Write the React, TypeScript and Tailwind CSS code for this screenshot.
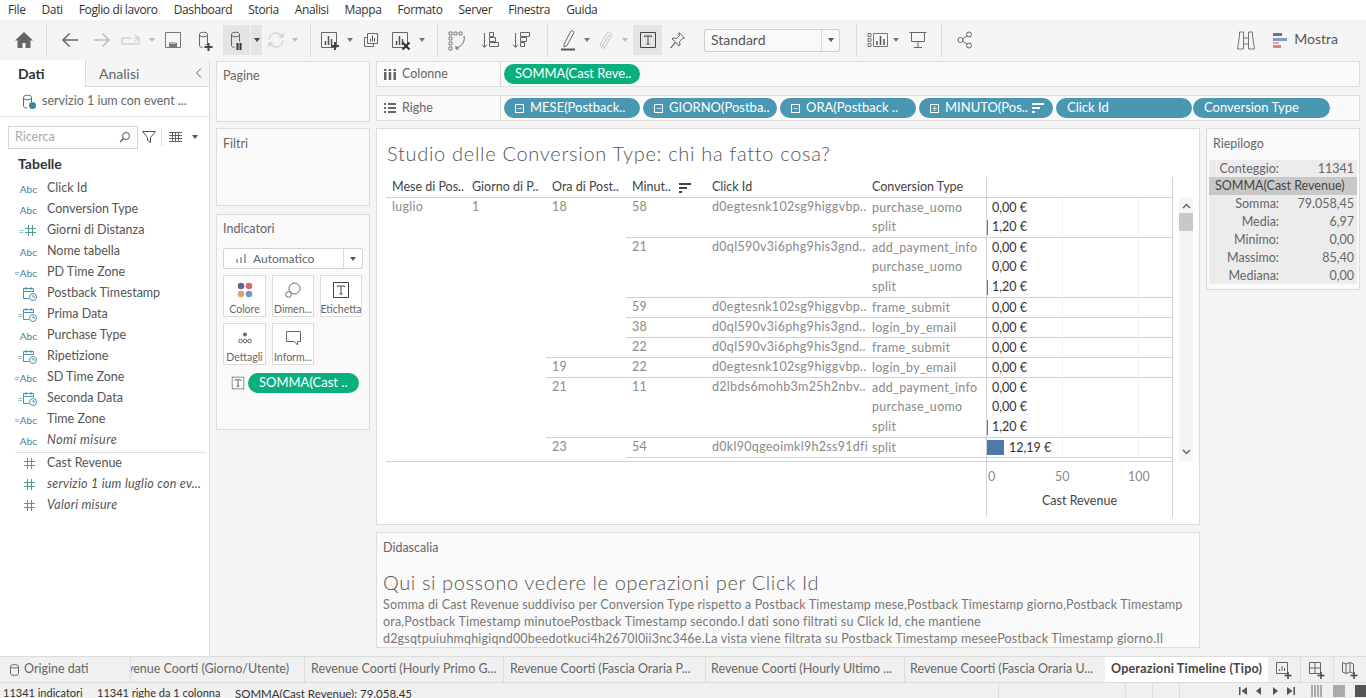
import type { ReactNode } from "react";

/* ── Toolbar icons ─────────────────────────────────────────── */

const Ico = ({ children, w = 24, h = 24 }: { children: ReactNode; w?: number; h?: number }) => (
  <svg width={w} height={h} viewBox={`0 0 ${w} ${h}`} fill="none" stroke="#666" strokeWidth="1" className="block shrink-0">
    {children}
  </svg>
);

const Caret = ({ color = "#777" }: { color?: string }) => (
  <svg width="6" height="4" viewBox="0 0 6 4" className="block shrink-0">
    <path d="M0 0h6L3 4z" fill={color} />
  </svg>
);

const DbPlus = () => (
  <Ico>
    <path d="M6.5 6.5c0-3 8-3 8 0v10h-2M6.5 6.5v11c0 1.500 2 2 3 2M6.5 6.500c0 3 8 3 8 0" />
    <path d="M15.500 15v8M11.500 19h8" stroke="#444" strokeWidth="2" />
  </Ico>
);

const SheetBars = ({ x = 5, y = 5 }: { x?: number; y?: number }) => (
  <g transform={`translate(${x} ${y})`}>
    <path d="M.5.500h15v15H.5z" />
    <path d="M4.500 13V9M7.500 13V4M10.500 13V7" stroke="#555" strokeWidth="1.500" />
  </g>
);

const TBox = () => (
  <Ico w={16} h={16}>
    <path d="M.5.500h15v15H.5z" stroke="#444" />
    <path d="M4.500 5V4h7v1M8 4v8M6.500 12h3" stroke="#444" />
  </Ico>
);

const Sep = () => <div className="w-px h-[34px] bg-[#dcdcdc] shrink-0" />;

const SortBars = () => (
  <svg width="14" height="10" viewBox="0 0 14 10" className="block shrink-0">
    <path d="M1 0h12v2H1zM1 4h8v2H1zM1 8h3v2H1z" fill="currentColor" />
  </svg>
);

const HashMark = () => (
  <svg width="13" height="13" viewBox="0 0 13 13" stroke="#4aa08b" strokeWidth="1" className="block">
    <path d="M4.500 1v11M8.500 1v11M1 4.500h11M1 8.500h11" />
  </svg>
);

const CalClock = () => (
  <svg width="14" height="15" viewBox="0 0 14 15" fill="none" stroke="#4d93ad" strokeWidth="1" className="block">
    <path d="M6 12.500H.5v-10h10V6M.5 5.500h10M3 1v3M8 1v3" />
    <circle cx="10" cy="11" r="3.500" />
    <path d="M10 9v2h2" />
  </svg>
);

/* ── Data ──────────────────────────────────────────────────── */

const MENU = ["File", "Dati", "Foglio di lavoro", "Dashboard", "Storia", "Analisi", "Mappa", "Formato", "Server", "Finestra", "Guida"];

const FIELDS: { kind: string; name: string; italic?: boolean }[] = [
  { kind: "abc", name: "Click Id" },
  { kind: "abc", name: "Conversion Type" },
  { kind: "=#", name: "Giorni di Distanza" },
  { kind: "abc", name: "Nome tabella" },
  { kind: "=abc", name: "PD Time Zone" },
  { kind: "date", name: "Postback Timestamp" },
  { kind: "=date", name: "Prima Data" },
  { kind: "abc", name: "Purchase Type" },
  { kind: "=date", name: "Ripetizione" },
  { kind: "=abc", name: "SD Time Zone" },
  { kind: "=date", name: "Seconda Data" },
  { kind: "=abc", name: "Time Zone" },
  { kind: "abc", name: "Nomi misure", italic: true },
];

const MEASURES = [
  { name: "Cast Revenue", italic: false },
  { name: "servizio 1 ium luglio con ev...", italic: true },
  { name: "Valori misure", italic: true },
];

const A = "d0egtesnk102sg9higgvbp..";
const B = "d0ql590v3i6phg9his3gnd..";

// line = first column that the row's top rule starts from (-1: no rule)
const ROWS = [
  { line: 0, c: ["luglio", "1", "18", "58", A, "purchase_uomo"], val: "0,00 €", bar: 0 },
  { line: -1, c: ["", "", "", "", "", "split"], val: "1,20 €", bar: 2 },
  { line: 3, c: ["", "", "", "21", B, "add_payment_info"], val: "0,00 €", bar: 0 },
  { line: -1, c: ["", "", "", "", "", "purchase_uomo"], val: "0,00 €", bar: 0 },
  { line: -1, c: ["", "", "", "", "", "split"], val: "1,20 €", bar: 2 },
  { line: 3, c: ["", "", "", "59", A, "frame_submit"], val: "0,00 €", bar: 0 },
  { line: 3, c: ["", "", "", "38", B, "login_by_email"], val: "0,00 €", bar: 0 },
  { line: 3, c: ["", "", "", "22", B, "frame_submit"], val: "0,00 €", bar: 0 },
  { line: 2, c: ["", "", "19", "22", A, "login_by_email"], val: "0,00 €", bar: 0 },
  { line: 2, c: ["", "", "21", "11", "d2lbds6mohb3m25h2nbv..", "add_payment_info"], val: "0,00 €", bar: 0 },
  { line: -1, c: ["", "", "", "", "", "purchase_uomo"], val: "0,00 €", bar: 0 },
  { line: -1, c: ["", "", "", "", "", "split"], val: "1,20 €", bar: 2 },
  { line: 2, c: ["", "", "23", "54", "d0kl90qgeoimkl9h2ss91dfi", "split"], val: "12,19 €", bar: 18 },
];

const COL_W = ["w-[80px]", "w-[80px]", "w-[80px]", "w-[80px]", "w-[160px]", "w-[120px]"];

const SUMMARY = [
  ["Somma:", "79.058,45"],
  ["Media:", "6,97"],
  ["Minimo:", "0,00"],
  ["Massimo:", "85,40"],
  ["Mediana:", "0,00"],
];

/* ── Bits ──────────────────────────────────────────────────── */

function FieldIcon({ kind }: { kind: string }) {
  const eq = kind.startsWith("=");
  return (
    <div className="w-[38px] pr-[1px] flex items-center justify-end shrink-0 text-[10px] text-[#3f83a0]">
      {eq && <span className={kind === "=abc" ? "text-[10px] leading-none" : "text-[10px] leading-none text-[#4d93ad]"}>=</span>}
      {kind.includes("abc") && <span className="leading-none">Abc</span>}
      {kind.includes("date") && <CalClock />}
      {kind.includes("#") && <HashMark />}
    </div>
  );
}

function Pill({ children, color, w, sign }: { children: ReactNode; color: string; w: string; sign?: string }) {
  return (
    <div className={`${w} ${color} h-[20px] rounded-[10px] flex items-center pl-[11px] pr-[8px] text-white text-[13px] whitespace-nowrap shrink-0 overflow-hidden`}>
      {sign && (
        <span className="w-[9px] h-[9px] border border-white mr-[6px] flex items-center justify-center text-[9px] leading-none shrink-0">
          {sign}
        </span>
      )}
      {children}
    </div>
  );
}

function MarkBtn({ icon, label }: { icon: ReactNode; label: string }) {
  return (
    <div className="w-[42px] first:w-[43px] h-[42px] border border-[#dcdcdc] bg-white flex flex-col items-center pt-[4px] text-[10.500px] text-[#666] whitespace-nowrap">
      <div className="h-[20px] flex items-center justify-center">{icon}</div>
      <div className="mt-[2px] leading-[14px]">{label}</div>
    </div>
  );
}

/* ── Page ──────────────────────────────────────────────────── */

export default function App() {
  return (
    <div className="w-[1366px] h-[698px] overflow-hidden flex flex-col bg-[#f5f5f5] text-[#666] font-['Lato','Open_Sans',sans-serif] text-[12.500px]">
      {/* ── Menu ───────────────────────────────────────────── */}
      <div className="h-[20px] bg-white flex items-center pl-[8px] gap-[16px] text-[12px] text-[#333] font-['Open_Sans',sans-serif] tracking-[-0.37px] shrink-0">
        {MENU.map((m) => (
          <span key={m}>{m}</span>
        ))}
      </div>

      {/* ── Toolbar ────────────────────────────────────────── */}
      <div className="h-[40px] flex items-center pl-[8px] shrink-0">
        <div className="w-[32px] flex justify-center">
          <svg width="20" height="18" viewBox="0 0 20 18"><path d="M10 1 1 9.500h2.500V17h5v-5h3v5h5V9.500H19z" fill="#666" /></svg>
        </div>
        <div className="ml-[6px]"><Sep /></div>
        <div className="ml-[7px] w-[32px] flex justify-center">
          <Ico w={18} h={16}><path d="M17 8H2M8.500 1.500 2 8l6.500 6.500" strokeWidth="1.500" /></Ico>
        </div>
        <div className="w-[32px] flex justify-center">
          <Ico w={18} h={16}><path d="M1 8h15M9.500 1.500 16 8l-6.500 6.500" stroke="#bbb" strokeWidth="1.500" /></Ico>
        </div>
        <div className="w-[26px] flex justify-center">
          <Ico w={20} h={14}><path d="M1 5v6h17V5h-5M10 5H1M14 2l4 3-4 3" stroke="#c4c4c4" /></Ico>
        </div>
        <div className="w-[16px] flex justify-center"><Caret color="#bbb" /></div>
        <div className="w-[26px] flex justify-center">
          <Ico w={16} h={16}><path d="M.5.500h15v15H.5zM4.500 15v-4h7v4" stroke="#777" /><path d="M5 12h6v3H5z" fill="#777" stroke="none" /></Ico>
        </div>
        <div className="w-[37px] flex justify-center"><DbPlus /></div>
        <div className="w-[27px] h-[30px] bg-[#e4e4e4] flex justify-center items-center">
          <Ico>
            <path d="M6.500 6.500c0-3 8-3 8 0v7M6.500 6.500v11c0 1.500 2 2 3 2M6.500 6.500c0 3 8 3 8 0" />
            <path d="M12.500 15v7M15.500 15v7" stroke="#333" strokeWidth="2" />
          </Ico>
        </div>
        <div className="ml-px w-[11px] h-[30px] bg-[#e4e4e4] flex justify-center items-center"><Caret color="#444" /></div>
        <div className="w-[28px] flex justify-center">
          <Ico w={18} h={18}><path d="M2 9a7 7 0 0 1 12-5l2 2M16 9a7 7 0 0 1-12 5l-2-2M16 2v4h-4M2 16v-4h4" stroke="#c4c4c4" /></Ico>
        </div>
        <div className="w-[10px] flex justify-center"><Caret color="#bbb" /></div>
        <div className="ml-[10px]"><Sep /></div>
        <div className="ml-[7px] w-[26px] flex justify-center">
          <Ico><SheetBars x={2} y={4} /><path d="M16 14v8M12 18h8" stroke="#444" strokeWidth="2" /></Ico>
        </div>
        <div className="w-[12px] flex justify-center"><Caret /></div>
        <div className="w-[30px] flex justify-center">
          <Ico w={20} h={20}>
            <path d="M3.500 7.500h3M3.500 7.500v9h9v-3" />
            <path d="M6.500 3.500h10v10h-10z" />
            <path d="M9.500 11.500V9M11.500 11.500V5.500M13.500 11.500V8" stroke="#555" />
          </Ico>
        </div>
        <div className="w-[32px] flex justify-center">
          <Ico><SheetBars x={2} y={4} /><path d="m12.500 14.500 7 7M19.500 14.500l-7 7" stroke="#333" strokeWidth="2" /></Ico>
        </div>
        <div className="w-[8px] flex justify-center"><Caret /></div>
        <div className="ml-[11px]"><Sep /></div>
        <div className="w-[38px] flex justify-center">
          <Ico>
            <path d="M4 4h3v3H4zM9 4h3v3H9zM14 4h3v3h-3zM4 9h3v3H4zM4 14h3v3H4zM4 19h3v3H4z" strokeWidth=".8" />
            <path d="M19 8c1 5-1 10-8 12M11 18v3h3" />
          </Ico>
        </div>
        <div className="w-[28px] flex justify-center">
          <Ico w={18} h={18}><path d="M3.500 2v14M1 13.500l2.500 3 2.500-3M8.500 1.500h4v4h-4zM8.500 6.500h6v4h-6zM8.500 11.500h9v4h-9z" /></Ico>
        </div>
        <div className="w-[34px] flex justify-center">
          <Ico w={18} h={18}><path d="M3.500 2v14M1 13.500l2.500 3 2.500-3M8.500 1.500h9v4h-9zM8.500 6.500h6v4h-6zM8.500 11.500h4v4h-4z" /></Ico>
        </div>
        <div className="ml-[9px]"><Sep /></div>
        <div className="ml-[8px] w-[24px] flex justify-center">
          <Ico w={18} h={22}>
            <path d="M5 15 12 2c1-1 3 0 3 1.500L8 16.500l-3 1.500z" />
            <path d="M2 20.500h14" stroke="#555" strokeWidth="2" />
          </Ico>
        </div>
        <div className="w-[14px] flex justify-center"><Caret /></div>
        <div className="w-[22px] flex justify-center">
          <Ico w={14} h={20}><path d="M11 5 5 15c-1 2 1 3 2 2l6-11c1-3-2-5-4-3L3 13c-2 3 1 6 3 5" stroke="#c4c4c4" /></Ico>
        </div>
        <div className="w-[17px] flex justify-center"><Caret color="#bbb" /></div>
        <div className="w-[29px] h-[30px] bg-[#e4e4e4] flex items-center justify-center"><TBox /></div>
        <div className="w-[30px] flex justify-center">
          <Ico w={18} h={18}><path d="m11 1.500 5.500 5.500-2 .500-3 3 .5 3.500-1 1-3-3.500-5.500 5.500 5-6-3.500-3 1-1 3.500.500 3-3z" /></Ico>
        </div>
        <div className="ml-[12px] w-[136px] h-[23px] bg-[#f9f9f9] border border-[#d0d0d0] rounded-[2px] flex items-center text-[14px] text-[#555]">
          <span className="flex-1 pl-[6px] -mt-[2px]">Standard</span>
          <span className="w-[18px] h-full border-l border-[#d8d8d8] flex items-center justify-center"><Caret color="#555" /></span>
        </div>
        <div className="ml-[16px]"><Sep /></div>
        <div className="ml-[9px] w-[24px] flex justify-center">
          <Ico w={22} h={16}>
            <path d="M1 1.500h3v3H1zM1 6.500h3v3H1zM1 11.500h3v3H1zM6.500 1.500h14v13h-14z" strokeWidth=".9" />
            <path d="M10 13V9M13.500 13V4M17 13V7" stroke="#555" strokeWidth="1.500" />
          </Ico>
        </div>
        <div className="w-[12px] flex justify-center"><Caret /></div>
        <div className="w-[32px] flex justify-center">
          <Ico w={18} h={18}><path d="M.5 1.500h17M2.500 1.500v9h13v-9M9 10.500v6M5 16.500h8" /></Ico>
        </div>
        <div className="ml-[7px]"><Sep /></div>
        <div className="w-[46px] flex justify-center">
          <Ico w={16} h={18}>
            <circle cx="12" cy="3.500" r="2.500" /><circle cx="3.500" cy="9" r="2.500" /><circle cx="12" cy="14.500" r="2.500" />
            <path d="m5.700 7.700 4.200-2.700M5.700 10.300l4.200 2.700" />
          </Ico>
        </div>
        <div className="flex-1" />
        <Ico w={20} h={22}>
          <path d="M1.500 20 3.500 7V3h4v17zM12.500 20V3h4v4l2 13zM7.500 9h5M7.500 15h5" strokeWidth=".9" />
        </Ico>
        <svg width="14" height="17" viewBox="0 0 14 17" className="block ml-[17px]">
          <path d="M0 1h9v3H0z" fill="#6d6f93" />
          <path d="M0 6h14v3H0z" fill="#7f9dc0" />
          <path d="M0 10h6v2H0z" fill="#e9a38e" />
          <path d="M0 13h8v3H0z" fill="#dc7f85" />
        </svg>
        <span className="ml-[7px] mr-[28px] -mt-[3px] text-[14px] text-[#555]">Mostra</span>
      </div>

      {/* ── Main ───────────────────────────────────────────── */}
      <div className="h-[596px] flex shrink-0">
        {/* Sidebar */}
        <div className="w-[210px] h-full bg-white border-r border-[#dcdcdc] shrink-0 flex flex-col">
          <div className="h-[27px] flex shrink-0">
            <div className="w-[85px] pl-[18px] flex items-center font-bold text-[14px] text-[#333]">Dati</div>
            <div className="flex-1 bg-[#f5f5f5] border-l border-b border-[#dcdcdc] flex items-center pl-[13px] pr-[7px] text-[14px] text-[#666]">
              <span className="flex-1">Analisi</span>
              <svg width="7" height="10" viewBox="0 0 7 10" fill="none" stroke="#666"><path d="M6 .5 1.500 5 6 9.500" /></svg>
            </div>
          </div>
          <div className="h-[30px] flex items-center pl-[22px] border-b border-[#e4e4e4] shrink-0 text-[12.500px] whitespace-nowrap">
            <svg width="15" height="16" viewBox="0 0 15 16" fill="none" stroke="#666" className="mr-[5px]">
              <path d="M1.500 3.500c0-3 8-3 8 0v5M1.500 3.500v8.500c0 1.500 2 2 3.500 2M1.500 3.500c0 3 8 3 8 0" />
              <circle cx="10.500" cy="11.500" r="3.500" fill="#3f83a0" stroke="none" />
            </svg>
            servizio 1 ium con event ...
          </div>
          <div className="h-[24px] mt-[8px] ml-[8px] flex items-center shrink-0">
            <div className="w-[130px] h-[23px] border border-[#d4d4d4] flex items-center pl-[6px] pr-[6px] text-[12.500px] text-[#aaa]">
              <span className="flex-1">Ricerca</span>
              <svg width="12" height="12" viewBox="0 0 12 12" fill="none" stroke="#555"><circle cx="7" cy="5" r="3.500" /><path d="M4.500 7.500 1 11" strokeWidth="1.300" /></svg>
            </div>
            <svg width="14" height="14" viewBox="0 0 14 14" fill="none" stroke="#555" className="ml-[4px]"><path d="M.5 1.500h13L8.500 7.500v5l-3-2v-3z" /></svg>
            <div className="w-px h-[18px] bg-[#dcdcdc] ml-[5px]" />
            <svg width="13" height="10" viewBox="0 0 13 10" fill="none" stroke="#555" className="ml-[7px]"><path d="M0 .5h13M0 3.500h13M0 6.500h13M0 9.500h13M3.500 0v10M6.500 0v10M9.500 0v10" strokeWidth=".9" /></svg>
            <span className="ml-[10px]"><Caret color="#555" /></span>
          </div>
          <div className="mt-[4px] pl-[18px] h-[20px] flex items-center font-bold text-[14px] text-[#333] shrink-0">Tabelle</div>
          <div className="mt-[5px] flex flex-col">
            {FIELDS.map((f) => (
              <div key={f.name} className="h-[21px] flex items-center text-[#555] whitespace-nowrap">
                <FieldIcon kind={f.kind} />
                <span className={f.italic ? "ml-[9px] italic tracking-[0.45px]" : "ml-[9px]"}>{f.name}</span>
              </div>
            ))}
          </div>
          <div className="h-px bg-[#e0e0e0] ml-[15px] mr-[3px] mt-[1px]" />
          <div className="flex flex-col">
            {MEASURES.map((f) => (
              <div key={f.name} className="h-[21px] flex items-center text-[#555] whitespace-nowrap">
                <div className="w-[36px] flex justify-end shrink-0"><HashMark /></div>
                <span className={f.italic ? "ml-[11px] italic tracking-[0.25px]" : "ml-[11px]"}>{f.name}</span>
              </div>
            ))}
          </div>
        </div>

        {/* Workspace */}
        <div className="flex-1 flex pl-[6px] pr-[6px] pt-[1px] gap-[6px] min-w-0">
          {/* Cards column */}
          <div className="w-[154px] flex flex-col shrink-0">
            <div className="h-[61px] bg-[#fafafa] border border-[#dcdcdc] pl-[6px] pt-[5px]">Pagine</div>
            <div className="h-[78px] mt-[6px] bg-[#fafafa] border border-[#dcdcdc] pl-[6px] pt-[6px]">Filtri</div>
            <div className="h-[216px] mt-[8px] bg-[#fafafa] border border-[#dcdcdc] px-[6px] pt-[5px]">
              <div className="h-[18px]">Indicatori</div>
              <div className="mt-[10px] h-[21px] bg-white border border-[#d4d4d4] rounded-[2px] flex items-center text-[12px]">
                <svg width="10" height="9" viewBox="0 0 10 9" className="ml-[12px] mr-[7px]"><path d="M0 5h2v4H0zM4 3h2v6H4zM8 0h2v9H8z" fill="#aaa" /></svg>
                <span className="flex-1 pt-[1px]">Automatico</span>
                <span className="w-[19px] h-full border-l border-[#d8d8d8] flex items-center justify-center"><Caret color="#555" /></span>
              </div>
              <div className="mt-[6px] flex gap-[6px]">
                <MarkBtn
                  label="Colore"
                  icon={
                    <svg width="16" height="16" viewBox="0 0 16 16">
                      <circle cx="4" cy="4" r="3.300" fill="#6d5f93" />
                      <circle cx="12" cy="4" r="3.300" fill="#d96a78" />
                      <circle cx="4" cy="12" r="3.300" fill="#e0a070" />
                      <circle cx="12" cy="12" r="3.300" fill="#6d9cc0" />
                    </svg>
                  }
                />
                <MarkBtn
                  label="Dimen..."
                  icon={
                    <svg width="16" height="16" viewBox="0 0 16 16" fill="none" stroke="#666">
                      <circle cx="9.500" cy="6.500" r="5.500" />
                      <circle cx="3.500" cy="12.500" r="2.800" fill="#fff" />
                    </svg>
                  }
                />
                <MarkBtn label="Etichetta" icon={<TBox />} />
              </div>
              <div className="mt-[6px] flex gap-[6px]">
                <MarkBtn
                  label="Dettagli"
                  icon={
                    <svg width="14" height="12" viewBox="0 0 14 12" fill="none" stroke="#666">
                      <circle cx="7" cy="2.500" r="2" fill="#666" stroke="none" />
                      <circle cx="2.500" cy="9" r="1.800" /><circle cx="7" cy="9" r="1.800" /><circle cx="11.500" cy="9" r="1.800" />
                    </svg>
                  }
                />
                <MarkBtn
                  label="Inform..."
                  icon={
                    <svg width="15" height="15" viewBox="0 0 15 15" fill="none" stroke="#666"><path d="M.5.500h14v10h-3v3.500l-3-3.500H.5z" /></svg>
                  }
                />
              </div>
              <div className="mt-[8px] flex items-center">
                <span className="ml-[7px] mr-[2px] scale-[.8]"><TBox /></span>
                <Pill color="bg-[#0bae7e]" w="w-[111px]">SOMMA(Cast ..</Pill>
              </div>
            </div>
          </div>

          {/* Shelves + view */}
          <div className="w-[984px] flex flex-col shrink-0">
            <div className="h-[26px] bg-[#fafafa] border border-[#dcdcdc] flex items-center">
              <div className="w-[124px] h-full border-r border-[#e0d8d0] flex items-center pl-[7px] shrink-0">
                <svg width="12" height="11" viewBox="0 0 12 11" className="mr-[6px]"><path d="M0 3h2.500v8H0zM0 0h2.500v2H0zM4.700 3h2.500v8H4.700zM4.700 0h2.500v2H4.700zM9.500 3H12v8H9.500zM9.500 0H12v2H9.500z" fill="#666" /></svg>
                Colonne
              </div>
              <div className="ml-[3px]"><Pill color="bg-[#0bae7e]" w="w-[136px]">SOMMA(Cast Reve..</Pill></div>
            </div>
            <div className="h-[26px] mt-[8px] bg-[#fafafa] border border-[#dcdcdc] flex items-center">
              <div className="w-[124px] h-full border-r border-[#e0d8d0] flex items-center pl-[7px] shrink-0">
                <svg width="12" height="10" viewBox="0 0 12 10" className="mr-[6px]"><path d="M0 0h2v2H0zM4 0h8v2H4zM0 4h2v2H0zM4 4h8v2H4zM0 8h2v2H0zM4 8h8v2H4z" fill="#666" /></svg>
                Righe
              </div>
              <div className="ml-[3px] flex gap-[3px]">
                <Pill color="bg-[#4a97b4]" w="w-[136px]" sign="−">MESE(Postback..</Pill>
                <Pill color="bg-[#4a97b4]" w="w-[134px]" sign="−">GIORNO(Postba..</Pill>
                <Pill color="bg-[#4a97b4]" w="w-[136px]" sign="−">ORA(Postback ..</Pill>
                <Pill color="bg-[#4a97b4]" w="w-[134px]" sign="+">
                  <span className="flex-1">MINUTO(Pos..</span>
                  <SortBars />
                </Pill>
                <Pill color="bg-[#4a97b4]" w="w-[136px]">Click Id</Pill>
                <div className="-ml-[2px]"><Pill color="bg-[#4a97b4]" w="w-[137px]">Conversion Type</Pill></div>
              </div>
            </div>

            <div className="mt-[7px] flex gap-[6px]">
              <div className="w-[824px] flex flex-col shrink-0">
                {/* View */}
                <div className="h-[397px] bg-white border border-[#dcdcdc] pl-[9px] flex flex-col">
                  <div className="h-[48px] pl-[1px] pt-[11px] text-[20px] leading-[26px] font-light tracking-[0.7px] text-[#555] whitespace-nowrap shrink-0">
                    Studio delle Conversion Type: chi ha fatto cosa?
                  </div>
                  <div className="flex">
                    <div className="w-[787px] shrink-0">
                      <div className="h-[20px] flex items-center text-[#444] whitespace-nowrap">
                        <span className="w-[80px] pl-[6px] pt-[1px]">Mese di Pos..</span>
                        <span className="w-[80px] pl-[6px] pt-[1px]">Giorno di P..</span>
                        <span className="w-[80px] pl-[6px] pt-[1px]">Ora di Post..</span>
                        <span className="w-[80px] pl-[6px] pt-[1px] flex items-center gap-[7px] text-[#444]">Minut.. <SortBars /></span>
                        <span className="w-[160px] pl-[6px] pt-[1px]">Click Id</span>
                        <span className="w-[120px] pl-[6px] pt-[1px]">Conversion Type</span>
                        <span className="w-[187px] h-full border-x border-[#d0d0d0]" />
                      </div>
                      <div className="relative">
                        {ROWS.map((r, i) => (
                          <div key={i} className="h-[20px] flex whitespace-nowrap text-[#8a8a8a]">
                            {r.c.map((t, j) => (
                              <div
                                key={j}
                                className={`${COL_W[j]} h-full pl-[6px] tracking-[0.3px] ${j === 5 ? "leading-[20px]" : "leading-[17px]"} ${r.line >= 0 && j >= r.line ? "border-t border-[#d0d0d0]" : ""}`}
                              >
                                {t}
                              </div>
                            ))}
                            <div className={`w-[187px] h-full flex items-center border-x border-[#d0d0d0] text-[#333] ${r.line >= 0 ? "border-t" : ""}`}>
                              {r.bar > 0 && <div className={r.bar > 2 ? "w-[17px] h-[15px] bg-[#4e79a7] shrink-0" : "w-px h-[15px] bg-[#4e79a7] shrink-0"} />}
                              <span className={`pt-[1px] ${r.bar > 2 ? "ml-[5px]" : r.bar > 0 ? "ml-[4px]" : "ml-[5px]"}`}>{r.val}</span>
                            </div>
                          </div>
                        ))}
                        <div className="ml-[240px] h-px bg-[#d0d0d0]" />
                        {/* grid lines of the bar pane */}
                        <div className="absolute top-0 bottom-0 left-[676px] w-px bg-[#f0f0f0]" />
                        <div className="absolute top-0 bottom-0 left-[752px] w-px bg-[#f0f0f0]" />
                      </div>
                      <div className="h-[3px] ml-[600px] border-x border-[#d0d0d0]" />
                      <div className="h-px bg-[#d0d0d0]" />
                      <div className="ml-[600px] w-[187px] h-[55px] border-x border-[#d0d0d0] relative text-[#8a8a8a]">
                        <span className="absolute left-[1px] top-[6px]">0</span>
                        <span className="absolute left-[68px] top-[6px]">50</span>
                        <span className="absolute left-[141px] top-[6px]">100</span>
                        <span className="absolute left-0 right-0 top-[30px] text-center text-[#444]">Cast Revenue</span>
                      </div>
                    </div>
                    {/* Scrollbar */}
                    <div className="ml-[6px] mt-[20px] w-[14px] h-[264px] bg-[#f5f5f5] flex flex-col items-center shrink-0">
                      <svg width="9" height="6" viewBox="0 0 9 6" fill="none" stroke="#666" strokeWidth="1.500" className="mt-[6px]"><path d="m1 5 3.500-3.500L8 5" /></svg>
                      <div className="w-[14px] h-[18px] bg-[#c8c8c8] mt-[4px]" />
                      <div className="flex-1" />
                      <svg width="9" height="6" viewBox="0 0 9 6" fill="none" stroke="#666" strokeWidth="1.500" className="mb-[6px]"><path d="m1 1 3.500 3.500L8 1" /></svg>
                    </div>
                  </div>
                </div>

                {/* Caption */}
                <div className="h-[116px] mt-[7px] bg-[#fafafa] border border-[#dcdcdc] pl-[6px] overflow-hidden whitespace-nowrap">
                  <div className="h-[18px] mt-[6px] leading-[18px]">Didascalia</div>
                  <div className="mt-[12px] h-[26px] text-[20px] leading-[26px] font-light tracking-[0.6px] text-[#555]">Qui si possono vedere le operazioni per Click Id</div>
                  <div className="leading-[17px] text-[#777] mt-[1px] tracking-[0.18px]">
                    <div>Somma di Cast Revenue suddiviso per Conversion Type rispetto a Postback Timestamp mese,Postback Timestamp giorno,Postback Timestamp</div>
                    <div>ora,Postback Timestamp minutoePostback Timestamp secondo.I dati sono filtrati su Click Id, che mantiene</div>
                    <div>d2gsqtpuiuhmqhigiqnd00beedotkuci4h2670l0ii3nc346e.La vista viene filtrata su Postback Timestamp meseePostback Timestamp giorno.Il</div>
                  </div>
                </div>
              </div>

              {/* Summary */}
              <div className="w-[154px] h-[162px] bg-[#fafafa] border border-[#dcdcdc] px-[2px] shrink-0">
                <div className="h-[31px] pl-[4px] pt-[6px] leading-[18px]">Riepilogo</div>
                <div className="bg-[#ececec] h-[124px] text-[#666]">
                  <div className="h-[17px] pt-[1px] flex items-center">
                    <span className="w-[70px] text-right">Conteggio:</span>
                    <span className="flex-1 text-right pr-[3px]">11341</span>
                  </div>
                  <div className="h-[18px] bg-[#c8c8c8] pl-[6px] flex items-center text-[#444]">SOMMA(Cast Revenue)</div>
                  {SUMMARY.map(([k, v]) => (
                    <div key={k} className="h-[18px] flex items-center">
                      <span className="w-[70px] text-right">{k}</span>
                      <span className="flex-1 text-right pr-[3px]">{v}</span>
                    </div>
                  ))}
                </div>
              </div>
            </div>
          </div>
        </div>
      </div>

      {/* ── Tabs ───────────────────────────────────────────── */}
      <div className="h-[27px] flex border-y border-[#dcdcdc] bg-[#f0f0f0] text-[#666] whitespace-nowrap shrink-0">
        <div className="w-[130px] flex items-center pl-[10px] shrink-0">
          <svg width="9" height="12" viewBox="0 0 9 12" fill="none" stroke="#666" className="mr-[5px]"><path d="M.5 2.500c0-2.500 8-2.500 8 0v7c0 2.500-8 2.500-8 0zM.5 2.500c0 2 8 2 8 0" /></svg>
          Origine dati
        </div>
        <div className="w-[175px] flex items-center justify-end pr-[15px] overflow-hidden border-l border-r border-[#dcdcdc] shrink-0">
          <span className="shrink-0">Revenue Coorti (Giorno/Utente)</span>
        </div>
        <div className="w-[199px] flex items-center pl-[6px] border-r border-[#dcdcdc] shrink-0">Revenue Coorti (Hourly Primo G...</div>
        <div className="w-[202px] flex items-center pl-[6px] border-r border-[#dcdcdc] shrink-0">Revenue Coorti (Fascia Oraria P...</div>
        <div className="w-[199px] flex items-center pl-[5px] border-r border-[#dcdcdc] shrink-0">Revenue Coorti (Hourly Ultimo ...</div>
        <div className="w-[200px] flex items-center pl-[5px] shrink-0">Revenue Coorti (Fascia Oraria U...</div>
        <div className="w-[163px] bg-white flex items-center pl-[6px] font-bold tracking-[0.2px] text-[#444] shrink-0">Operazioni Timeline (Tipo)</div>
        <div className="w-[32px] flex items-center justify-center shrink-0">
          <Ico w={18} h={18}><path d="M1.500 1.500h11v11h-11z" /><path d="M4.500 10V8M7 10V5M9.500 10V7" /><path d="M13 11v7M9.500 14.500h7" stroke="#444" strokeWidth="1.500" /></Ico>
        </div>
        <div className="w-[33px] border-l border-[#dcdcdc] flex items-center justify-center shrink-0">
          <Ico w={18} h={18}><path d="M1.500 1.500h11v11h-11zM7 1.500v11M1.500 7h11" /><path d="M13 11v7M9.500 14.500h7" stroke="#444" strokeWidth="1.500" /></Ico>
        </div>
        <div className="flex-1 border-l border-[#dcdcdc] flex items-center justify-center">
          <Ico w={18} h={18}><path d="M1.500 1.500 5 3l4-1.500 3.500 1.500v9.500L9 11l-4 1.500-3.500-1.500zM5 3v9.500M9 1.500V11" /><path d="M13 11v7M9.500 14.500h7" stroke="#444" strokeWidth="1.500" /></Ico>
        </div>
      </div>

      {/* ── Status bar ─────────────────────────────────────── */}
      <div className="flex-1 flex items-center pl-[3px] text-[11px] text-[#333] bg-[#f0f0f0] whitespace-nowrap overflow-hidden">
        <span className="w-[94px] pt-[6px] shrink-0">11341 indicatori</span>
        <span className="w-[138px] pt-[6px] shrink-0">11341 righe da 1 colonna</span>
        <span className="w-[763px] pt-[6px] text-[11.500px] shrink-0">SOMMA(Cast Revenue): 79.058,45</span>
        <div className="w-[127px] h-full border-l border-[#dcdcdc] shrink-0" />
        <div className="w-[27px] h-full border-l border-[#dcdcdc] shrink-0" />
        <div className="w-[27px] h-full border-l border-[#dcdcdc] shrink-0" />
        <div className="w-[60px] h-full border-l border-[#dcdcdc] shrink-0" />
        <div className="flex items-center gap-[8px] shrink-0">
          <svg width="8" height="8" viewBox="0 0 8 8"><path d="M0 0h1.500v8H0zM8 0v8L2.500 4z" fill="#555" /></svg>
          <svg width="8" height="8" viewBox="0 0 8 8"><path d="M6 0v8L1 4z" fill="#555" /></svg>
          <svg width="8" height="8" viewBox="0 0 8 8"><path d="M2 0v8l5-4z" fill="#555" /></svg>
          <svg width="8" height="8" viewBox="0 0 8 8"><path d="M8 0H6.500v8H8zM0 0v8l5.500-4z" fill="#555" /></svg>
        </div>
        <div className="ml-[16px] flex items-center gap-[10px] shrink-0">
          <div className="w-[12px] h-[12px] bg-[repeating-linear-gradient(90deg,#aaa_0,#aaa_2px,#f0f0f0_2px,#f0f0f0_3px)]" />
          <div className="w-[12px] h-[12px] bg-[#aaa]" />
          <div className="w-[12px] h-[12px] bg-[#555]" />
        </div>
      </div>
    </div>
  );
}
